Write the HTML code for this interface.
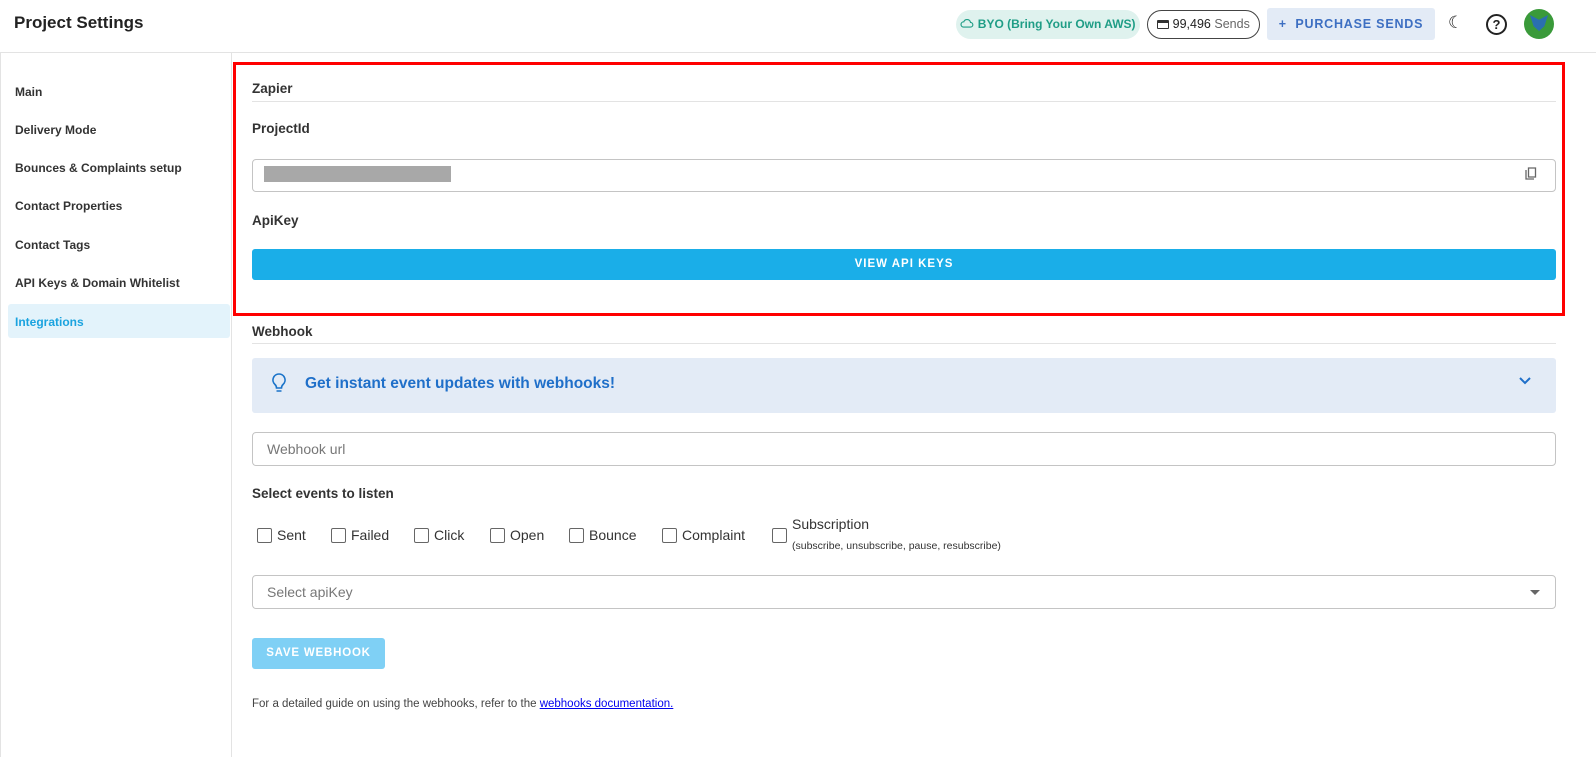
<!DOCTYPE html><html><head><style>
body{margin:0;width:1596px;height:757px;background:#fff;font-family:"Liberation Sans",sans-serif;color:#222;position:relative;overflow:hidden}
.a{position:absolute}
.hdr{left:0;top:0;width:1596px;height:52px;border-bottom:1px solid #e3e3e3}
.side{left:0;top:53px;width:230px;height:704px;border-right:1px solid #e3e3e3;border-left:1px solid #e3e3e3}
.nav{position:absolute;left:15px;font-size:12px;font-weight:bold;color:#333}
.lbl{font-size:13.5px;font-weight:bold;color:#333}
.inp{border:1px solid #c4c4c4;border-radius:4px;background:#fff;box-sizing:border-box}
.cb{display:inline-block;width:13px;height:13px;border:1.5px solid #666;border-radius:2px;vertical-align:-3px;margin-right:5px}
.ev{position:absolute;top:527px;font-size:14px;color:#333}
</style></head><body>
<div class="a hdr"></div>
<div class="a" style="left:14px;top:13px;font-size:17px;font-weight:bold;color:#222">Project Settings</div>
<div class="a" style="left:956px;top:10px;width:184px;height:29px;border-radius:15px;background:#dff2ee;color:#1f9d86;font-size:12px;font-weight:bold;line-height:29px;text-align:center">
<svg width="14" height="12" viewBox="0 0 24 20" style="vertical-align:-1px"><path d="M6 17h12a4 4 0 0 0 0-8 6 6 0 0 0-11.5-1A4.5 4.5 0 0 0 6 17z" fill="none" stroke="#1f9d86" stroke-width="2"/></svg> BYO (Bring Your Own AWS)</div>
<div class="a" style="left:1147px;top:10px;width:111px;height:27px;border:1px solid #444;border-radius:15px;font-size:12.5px;line-height:27px;text-align:center;color:#333">
<span style="display:inline-block;width:12px;height:9px;border:1.5px solid #333;border-top-width:3px;border-radius:1px;vertical-align:-1px;box-sizing:border-box"></span> <b style="font-weight:normal;color:#222">99,496</b> <span style="color:#666">Sends</span></div>
<div class="a" style="left:1267px;top:8px;width:168px;height:32px;background:#e3ebf6;border-radius:3px;color:#3d6fc2;font-size:12.5px;font-weight:bold;letter-spacing:.8px;line-height:32px;text-align:center">+&nbsp; PURCHASE SENDS</div>
<div class="a" style="left:1448px;top:13px;font-size:17px">☾</div>
<div class="a" style="left:1486px;top:14px;width:17px;height:17px;border:2px solid #222;border-radius:50%;font-size:13px;font-weight:bold;line-height:17px;text-align:center">?</div>
<div class="a" style="left:1524px;top:9px;width:30px;height:30px;border-radius:50%;background:#3a9a3a;overflow:hidden"><div style="margin:6px 6px;width:18px;height:16px;background:#2a6fb0;clip-path:polygon(0 0,50% 30%,100% 0,80% 70%,50% 100%,20% 70%)"></div></div>
<div class="a side"></div>
<div class="nav" style="top:85px">Main</div>
<div class="nav" style="top:123px">Delivery Mode</div>
<div class="nav" style="top:161px">Bounces &amp; Complaints setup</div>
<div class="nav" style="top:199px">Contact Properties</div>
<div class="nav" style="top:238px">Contact Tags</div>
<div class="nav" style="top:276px">API Keys &amp; Domain Whitelist</div>
<div class="a" style="left:8px;top:304px;width:222px;height:34px;background:#e3f3fb;border-radius:3px"></div>
<div class="nav" style="top:315px;color:#1aa3df">Integrations</div>
<div class="a" style="left:233px;top:62px;width:1326px;height:248px;border:3px solid #f00"></div>
<div class="a lbl" style="left:252px;top:81px">Zapier</div>
<div class="a" style="left:252px;top:101px;width:1304px;height:1px;background:#e3e3e3"></div>
<div class="a lbl" style="left:252px;top:121px">ProjectId</div>
<div class="a inp" style="left:252px;top:159px;width:1304px;height:33px"></div>
<div class="a" style="left:264px;top:166px;width:187px;height:16px;background:#a8a8a8"></div>
<svg class="a" style="left:1524px;top:167px" width="14" height="14" viewBox="0 0 14 14"><path d="M2 3v9h8 M4.5 1h7v9h-7z" fill="none" stroke="#666" stroke-width="1.3"/></svg>
<div class="a lbl" style="left:252px;top:213px">ApiKey</div>
<div class="a" style="left:252px;top:249px;width:1304px;height:31px;background:#1aaee8;border-radius:3px;color:#fff;font-size:11.5px;font-weight:bold;letter-spacing:1px;line-height:31px;text-align:center">VIEW API KEYS</div>
<div class="a lbl" style="left:252px;top:324px">Webhook</div>
<div class="a" style="left:252px;top:343px;width:1304px;height:1px;background:#e3e3e3"></div>
<div class="a" style="left:252px;top:358px;width:1304px;height:55px;background:#e3ebf6;border-radius:3px"></div>
<svg class="a" style="left:270px;top:372px" width="18" height="24" viewBox="0 0 18 24"><path d="M9 2a6 6 0 0 0-4 10.5c1 1 1.5 2 1.5 3.5h5c0-1.5.5-2.5 1.5-3.5A6 6 0 0 0 9 2z M6.5 19h5" fill="none" stroke="#1a73c9" stroke-width="1.6"/></svg>
<div class="a" style="left:305px;top:375px;font-size:15.5px;font-weight:bold;color:#1f6fc9">Get instant event updates with webhooks!</div>
<svg class="a" style="left:1519px;top:377px" width="12" height="8" viewBox="0 0 12 8"><path d="M1 1l5 5 5-5" fill="none" stroke="#1f6fc9" stroke-width="2"/></svg>
<div class="a inp" style="left:252px;top:432px;width:1304px;height:34px;padding-left:14px;line-height:32px;font-size:14px;color:#777">Webhook url</div>
<div class="a lbl" style="left:252px;top:486px">Select events to listen</div>
<div class="ev" style="left:257px"><span class="cb"></span>Sent</div>
<div class="ev" style="left:331px"><span class="cb"></span>Failed</div>
<div class="ev" style="left:414px"><span class="cb"></span>Click</div>
<div class="ev" style="left:490px"><span class="cb"></span>Open</div>
<div class="ev" style="left:569px"><span class="cb"></span>Bounce</div>
<div class="ev" style="left:662px"><span class="cb"></span>Complaint</div>
<div class="ev" style="left:772px"><span class="cb"></span></div>
<div class="a" style="left:792px;top:516px;font-size:14px;color:#333">Subscription</div>
<div class="a" style="left:792px;top:540px;font-size:10.5px;color:#333">(subscribe, unsubscribe, pause, resubscribe)</div>
<div class="a inp" style="left:252px;top:575px;width:1304px;height:34px;padding-left:14px;line-height:32px;font-size:14px;color:#777">Select apiKey</div>
<div class="a" style="left:1530px;top:590px;border:5px solid transparent;border-top-color:#666;border-bottom:0"></div>
<div class="a" style="left:252px;top:638px;width:133px;height:31px;background:#7fd0f5;border-radius:3px;color:#fff;font-size:11.5px;font-weight:bold;letter-spacing:.8px;line-height:31px;text-align:center">SAVE WEBHOOK</div>
<div class="a" style="left:252px;top:698px;font-size:11.5px;color:#444">For a detailed guide on using the webhooks, refer to the <span style="color:#00e;text-decoration:underline">webhooks documentation.</span></div>
</body></html>
